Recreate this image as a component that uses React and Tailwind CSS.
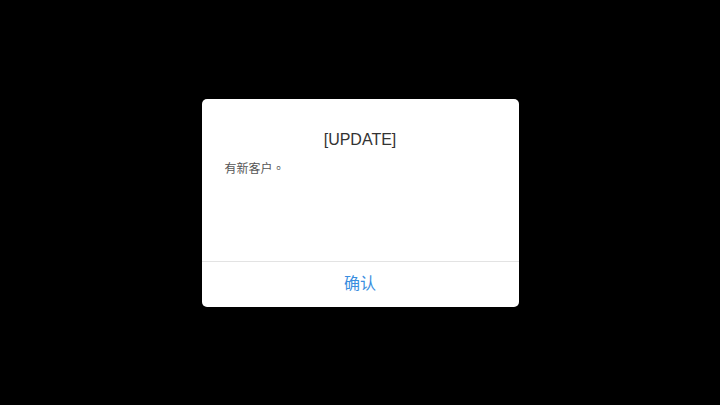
export default function App() {
  const font = { fontFamily: '"Liberation Sans", "Noto Sans CJK SC", sans-serif' };
  return (
    <div className="w-[720px] h-[405px] bg-black flex items-center justify-center" style={font}>
      <div className="w-[317px] h-[208px] bg-white rounded-[5px] flex flex-col overflow-hidden">
        <div className="h-[162px] px-[23px] pt-[30px]">
          <div className="text-[16px] leading-[22px] text-[#333333] text-center">[UPDATE]</div>
          <div className="mt-[9px] text-[12px] leading-[18px] text-[#555555] font-['Liberation_Sans','Noto_Sans_CJK_TC',sans-serif]">有新客户。</div>
        </div>
        <div className="flex-1 border-t border-[#e3e3e3] flex items-center justify-center text-[16px] text-[#3a8ee0]">
          确认
        </div>
      </div>
    </div>
  );
}
